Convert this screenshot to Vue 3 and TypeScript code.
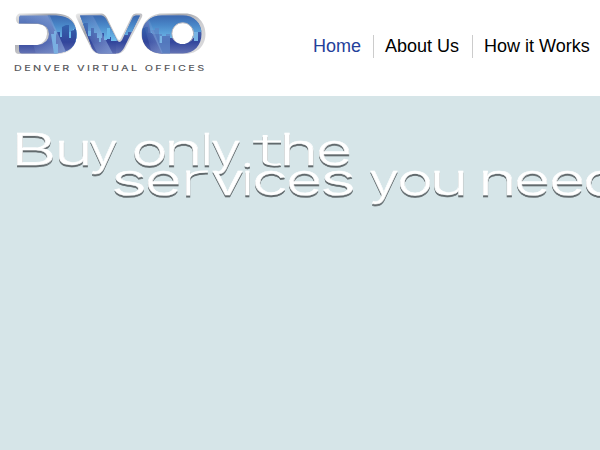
<script setup lang="ts">
interface NavItem { label: string; active?: boolean }
const nav: NavItem[] = [
  { label: 'Home', active: true },
  { label: 'About Us' },
  { label: 'How it Works' },
]

// Share of each letter's advance taken by its left and right side bearings
const bearings: Record<string, [number, number]> = {
  B: [0.13, 0.08], u: [0.12, 0.13], y: [0.04, 0.04], o: [0.085, 0.085], n: [0.13, 0.12],
  l: [0.35, 0.35], t: [0.06, 0.08], h: [0.13, 0.12], e: [0.085, 0.085], s: [0.09, 0.09],
  r: [0.19, 0.05], v: [0.04, 0.04], i: [0.33, 0.33], c: [0.085, 0.085], d: [0.085, 0.13],
}

interface Glyph { ch: string; x: number; width: number }
interface Word { text: string; y: number; glyphs: Glyph[] }

// Each span is the visible left and right edge of one letter
function word(text: string, y: number, spans: [number, number][]): Word {
  const glyphs = [...text].map((ch, i) => {
    const [left, right] = bearings[ch]
    const [from, to] = spans[i]
    const width = (to - from) / (1 - left - right)
    return { ch, x: from - left * width, width }
  })
  return { text, y, glyphs }
}

const words: Word[] = [
  word('Buy', 165, [[16.5, 53], [58.5, 88], [90, 117]]),
  word('only', 165, [[134.5, 164.5], [169, 198.5], [205, 209], [212, 240]]),
  word('the', 165, [[255.5, 280], [284.5, 314], [319, 349]]),
  word('services', 195.3, [[114, 144], [148, 178.5], [183.5, 208], [212, 243], [245.5, 249.5], [255, 285], [289, 319], [323, 353]]),
  word('you', 195.3, [[370, 398], [400, 430], [434, 463.5]]),
  word('need', 195.3, [[483, 512.5], [517, 547], [552, 582], [586, 617]]),
]
const isNarrow = (ch: string): boolean => 'tr'.includes(ch)
</script>

<template>
  <div class="page">
    <header class="header">
      <svg class="logo" viewBox="10 8 202 68" width="202" height="68">
        <defs>
          <linearGradient id="blue" gradientUnits="userSpaceOnUse" x1="0" y1="14" x2="0" y2="54">
            <stop offset="0" stop-color="#6a89c6" />
            <stop offset=".35" stop-color="#4a68b2" />
            <stop offset=".7" stop-color="#33469c" />
            <stop offset="1" stop-color="#6675b5" />
          </linearGradient>
          <linearGradient id="sky" gradientUnits="userSpaceOnUse" x1="0" y1="14" x2="0" y2="42">
            <stop offset="0" stop-color="#3a64ad" />
            <stop offset=".4" stop-color="#4987c8" />
            <stop offset="1" stop-color="#74c2ef" />
          </linearGradient>
          <linearGradient id="town" gradientUnits="userSpaceOnUse" x1="0" y1="24" x2="0" y2="54">
            <stop offset="0" stop-color="#3465af" />
            <stop offset=".6" stop-color="#32459b" />
            <stop offset="1" stop-color="#5b6bb0" />
          </linearGradient>
          <linearGradient id="metal" x1="0" y1="0" x2="1" y2="1">
            <stop offset="0" stop-color="#ededed" />
            <stop offset=".3" stop-color="#a2a4aa" />
            <stop offset=".6" stop-color="#cfcfd2" />
            <stop offset="1" stop-color="#dcdcde" />
          </linearGradient>
          <linearGradient id="glare" x1="0" y1="0" x2="1" y2="0">
            <stop offset="0" stop-color="#8ba6da" stop-opacity="0" />
            <stop offset="1" stop-color="#8ba6da" stop-opacity=".7" />
          </linearGradient>
          <clipPath id="clipD"><path d="M20 15.500H56Q76 16.500 76.500 34T56 53.500H22Q19 53.500 19 50V45H38Q49 43 49 34T38 23.500H19V17Z" /></clipPath>
          <clipPath id="clipV"><path d="M80 15.500H101Q104 15.500 106 19L117 40Q119.500 44 122 40L133 17Q134 15.500 136 15.500H140L124 48Q121 53.500 116 53.500H101Q95 53.500 92 48Z" /></clipPath>
          <clipPath id="clipO"><path clip-rule="evenodd" d="M162 15.500H183C194 15.500 201.500 23 201.500 34S194 53.500 183 53.500H162C150 53.500 142 45 142 34S150 15.500 162 15.500ZM182.500 22.500A10.800 10.800 0 1 0 182.500 44.100A10.800 10.800 0 1 0 182.500 22.500Z" /></clipPath>
        </defs>

        <path fill="url(#metal)" d="M19 13.500H56Q76.500 14 76.500 34T56 54H19Q15 54 15 50V45H37Q46 43 47 34T38 24H20Q17 24 16 20T19 13.500Z" />
        <g clip-path="url(#clipD)">
          <path fill="url(#blue)" d="M15 14H77V54H15Z" />
          <path fill="url(#sky)" d="M47 14H77V54H66Z" />
          <path fill="#67b7e8" d="M51 34H54V31H56V44H58V54H54ZM69 32H73V29H77V42H69Z" />
          <path fill="url(#town)" d="M57 37V32H60V37H62V27L66 25H69V38H71V31L74 30V29H77V54H66Z" />
          <path fill="url(#glare)" d="M24 14H49L67 54H36Z" />
        </g>

        <path fill="url(#metal)" d="M78 13.500H102Q105 14 107 18L117 38Q119.500 42 121 38L132 16Q133 13.500 136 13.500H141Q143 14 142 17L125 49Q122 54 116 54H101Q94 54 91 48L76 17Q75 14 78 13.500Z" />
        <g clip-path="url(#clipV)">
          <path fill="url(#blue)" d="M76 14H144V54H76Z" />
          <path fill="url(#sky)" d="M78 14H110L120 38L115 42L92 42Z" />
          <path fill="url(#town)" d="M80 24H84V23H88V34H91V28H94V33H97V38H102V33H104V40H107V37H111V41H116V54H90Z" />
          <path fill="#67b7e8" d="M88 31H91V36H88ZM99 36H101V42H99ZM107 28H110V39H107Z" />
          <path fill="url(#glare)" d="M78 16H93L113 54H98Z" />
          <path fill="url(#sky)" d="M129 14H143L135 34H132V32H128V35H124Z" />
        </g>

        <path fill="url(#metal)" fill-rule="evenodd" d="M162 13.500H185C198 13.500 205.500 23 205.500 34S198 54 185 54H162C150 54 141.500 45 141.500 34S150 13.500 162 13.500ZM182.500 22.500A10.800 10.800 0 1 0 182.500 44.100A10.800 10.800 0 1 0 182.500 22.500Z" />
        <g clip-path="url(#clipO)">
          <path fill="url(#blue)" d="M141 14H203V54H141Z" />
          <path fill="url(#sky)" d="M147 14H203V32H194V38H170V36H162V43H159V34H151Z" />
          <path fill="url(#town)" d="M141 28H145V27H148V33H152L163 54H150L141 46Z" />
          <path fill="#5b84c6" fill-opacity=".8" d="M151 30H155V28H159V34H162V36H166V34H170V54H162Z" />
          <path fill="#78b4e4" d="M160 36H162V43H160ZM194 32H198V41H194Z" />
          <path fill="url(#glare)" fill-opacity=".7" d="M141 14H147L163 54H152Z" />
        </g>
        <path class="rim" d="M175 41.300A10.900 10.900 0 1 1 190.500 41.300" />
        <text class="tagline" x="14" y="71" textLength="192.500" lengthAdjust="spacingAndGlyphs">DENVER VIRTUAL OFFICES</text>
      </svg>
      <nav class="nav">
        <a v-for="item in nav" :key="item.label" class="link" :class="{ active: item.active }">{{ item.label }}</a>
      </nav>
    </header>
    <main class="hero">
      <svg class="headline" viewBox="0 96 640 130" width="640" height="130">
        <text v-for="w in words" :key="w.text" class="word" :y="w.y"><tspan
          v-for="(g, i) in w.glyphs"
          :key="i"
          :class="{ narrow: isNarrow(g.ch) }"
          :x="g.x"
          :textLength="g.width"
          lengthAdjust="spacingAndGlyphs"
        >{{ g.ch }}</tspan></text>
      </svg>
    </main>
  </div>
</template>

<style>
body { margin: 0; overflow: hidden; }
</style>

<style scoped>
.page { width: 600px; height: 450px; overflow: hidden; display: flex; flex-direction: column; background: #fff; font-family: "Liberation Sans", Arial, sans-serif; }
.header { height: 96px; flex: none; display: flex; align-items: flex-start; }
.logo { flex: none; margin: 8px 0 0 10px; }
.rim { fill: none; stroke: #b9bbc2; stroke-width: 1px; }
.tagline { font-family: Inter, sans-serif; font-size: 7px; font-weight: 500; letter-spacing: 1.5px; fill: #58595d; }
.nav { display: flex; margin: 35px 0 0 89px; }
.link { flex: none; white-space: nowrap; color: #000; font-size: 18px; line-height: 23px; padding: 0 12px 0 11px; border-left: 1px solid #ccc; }
.link:first-child { border-left: 0; padding-left: 12px; }
.link:nth-child(2) { padding-right: 13px; }
.link.active { color: #24409a; }
.hero { flex: 1; background: #d6e5e8; }
.headline { display: block; filter: drop-shadow(.6px 2px 0 #626a6d); }
.word { font-family: Inter, sans-serif; font-size: 43.5px; font-weight: 300; fill: #fff; stroke: #fff; stroke-width: .4px; }
.narrow { font-weight: 100; stroke-width: .8px; }
</style>
